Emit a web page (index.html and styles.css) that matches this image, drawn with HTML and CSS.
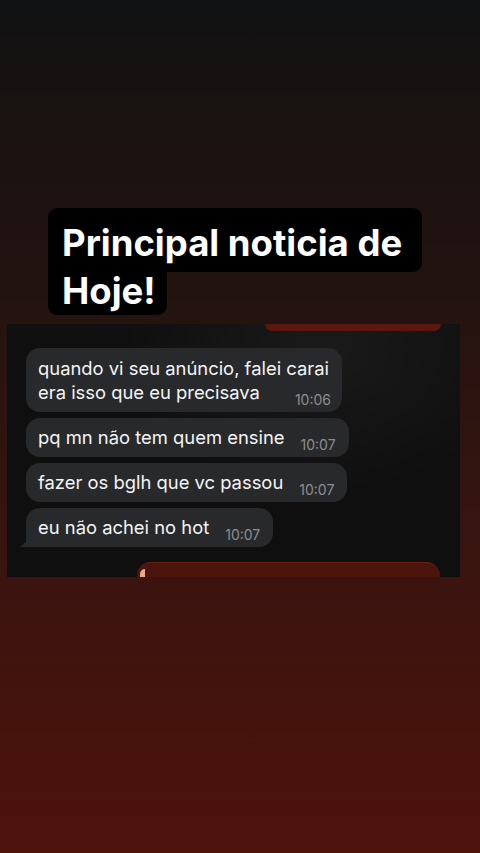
FILE: index.html
```html
<!DOCTYPE html>
<html lang="pt">
<head>
  <meta charset="UTF-8" />
  <meta name="viewport" content="width=device-width, initial-scale=1.0"/>
  <title>Principal noticia de Hoje!</title>
  <link rel="stylesheet" href="styles.css">
</head>
<body>

  <div class="story">

    <!-- TITULO -->
    <h1 class="headline">
      <span class="headline-top">Principal noticia de</span>
      <span class="headline-bottom">Hoje!</span>
    </h1>

    <!-- PRINT DA CONVERSA -->
    <div class="print">
      <div class="sent sent-top"></div>

      <div class="chat">
        <div class="bubble multi">
          <span class="msg">quando vi seu anúncio, falei carai<br>era isso que eu precisava</span>
          <span class="time">10:06</span>
        </div>
        <div class="bubble">
          <span class="msg">pq mn não tem quem ensine</span>
          <span class="time">10:07</span>
        </div>
        <div class="bubble">
          <span class="msg">fazer os bglh que vc passou</span>
          <span class="time">10:07</span>
        </div>
        <div class="bubble last">
          <span class="msg">eu não achei no hot</span>
          <span class="time">10:07</span>
        </div>
      </div>

      <div class="sent sent-bottom"><span class="peach"></span></div>
    </div>

  </div>

</body>
</html>
```

FILE: styles.css
```css
body {
  margin: 0;
  font-family: 'Inter', 'Liberation Sans', sans-serif;
  background: linear-gradient(#111213 0%, #1a1211 15%, #211310 32%, #2f1410 50%, #3b140f 68%, #4e120b 100%);
  min-height: 853px;
  color: #fff;
  overflow: hidden;
}

.story {
  padding-top: 208px;
}

/* Titulo com fundo preto */
.headline {
  margin: 0 0 0 48px;
  display: flex;
  flex-direction: column;
  align-items: flex-start;
  font-size: 36.5px;
  font-weight: 700;
  letter-spacing: 0;
}

.headline span {
  display: block;
  background: #000;
}

.headline-top {
  padding: 12px 20px 6px 14px;
  line-height: 46px;
  border-radius: 9px 9px 9px 0;
}

.headline-bottom {
  padding: 0 11px 4px 14px;
  line-height: 39px;
  border-radius: 0 0 9px 9px;
}

/* Print */
.print {
  margin: 9px 0 0 7px;
  width: 453px;
  height: 253px;
  background: radial-gradient(ellipse at 70% 10%, #1a1a1b 0%, #0f0f10 45%);
  overflow: hidden;
  display: flex;
  flex-direction: column;
}

.sent {
  background: #5b160d;
  flex-shrink: 0;
}

.sent-top {
  height: 7px;
  width: 176px;
  margin-left: 258px;
  border-radius: 0 0 8px 8px;
}

.sent-bottom {
  height: 24px;
  width: 303px;
  margin: 15px 0 0 130px;
  border-radius: 14px 14px 0 0;
  background: #4b140d;
  border-top: 1px solid #6a1e12;
}

.peach {
  display: block;
  width: 5px;
  height: 10px;
  margin: 6px 0 0 3px;
  background: #e8a98a;
  border-radius: 5px 0 0 0;
}

.chat {
  padding: 17px 0 0 19px;
  display: flex;
  flex-direction: column;
  align-items: flex-start;
  gap: 6px;
}

.bubble {
  position: relative;
  display: flex;
  align-items: flex-end;
  gap: 16px;
  background: #28292b;
  border-radius: 14px;
  padding: 8px 13px 8px 12px;
  font-size: 18.4px;
  line-height: 23px;
  color: #f4f4f4;
}

.bubble .time {
  font-size: 14px;
  line-height: 16px;
  color: #8d8e90;
  margin-bottom: -4px;
}

.bubble.multi {
  display: grid;
  padding: 8px 13px 8px 12px;
  line-height: 24px;
}

.bubble.multi .msg,
.bubble.multi .time {
  grid-area: 1 / 1;
}

.bubble.multi .time {
  justify-self: end;
  align-self: end;
  margin-right: -2px;
}

.bubble.last {
  border-bottom-left-radius: 4px;
}

.bubble.last::before {
  content: "";
  position: absolute;
  left: -6px;
  bottom: 0;
  width: 12px;
  height: 10px;
  background: #28292b;
  clip-path: polygon(100% 0, 100% 100%, 0 100%);
}
```
